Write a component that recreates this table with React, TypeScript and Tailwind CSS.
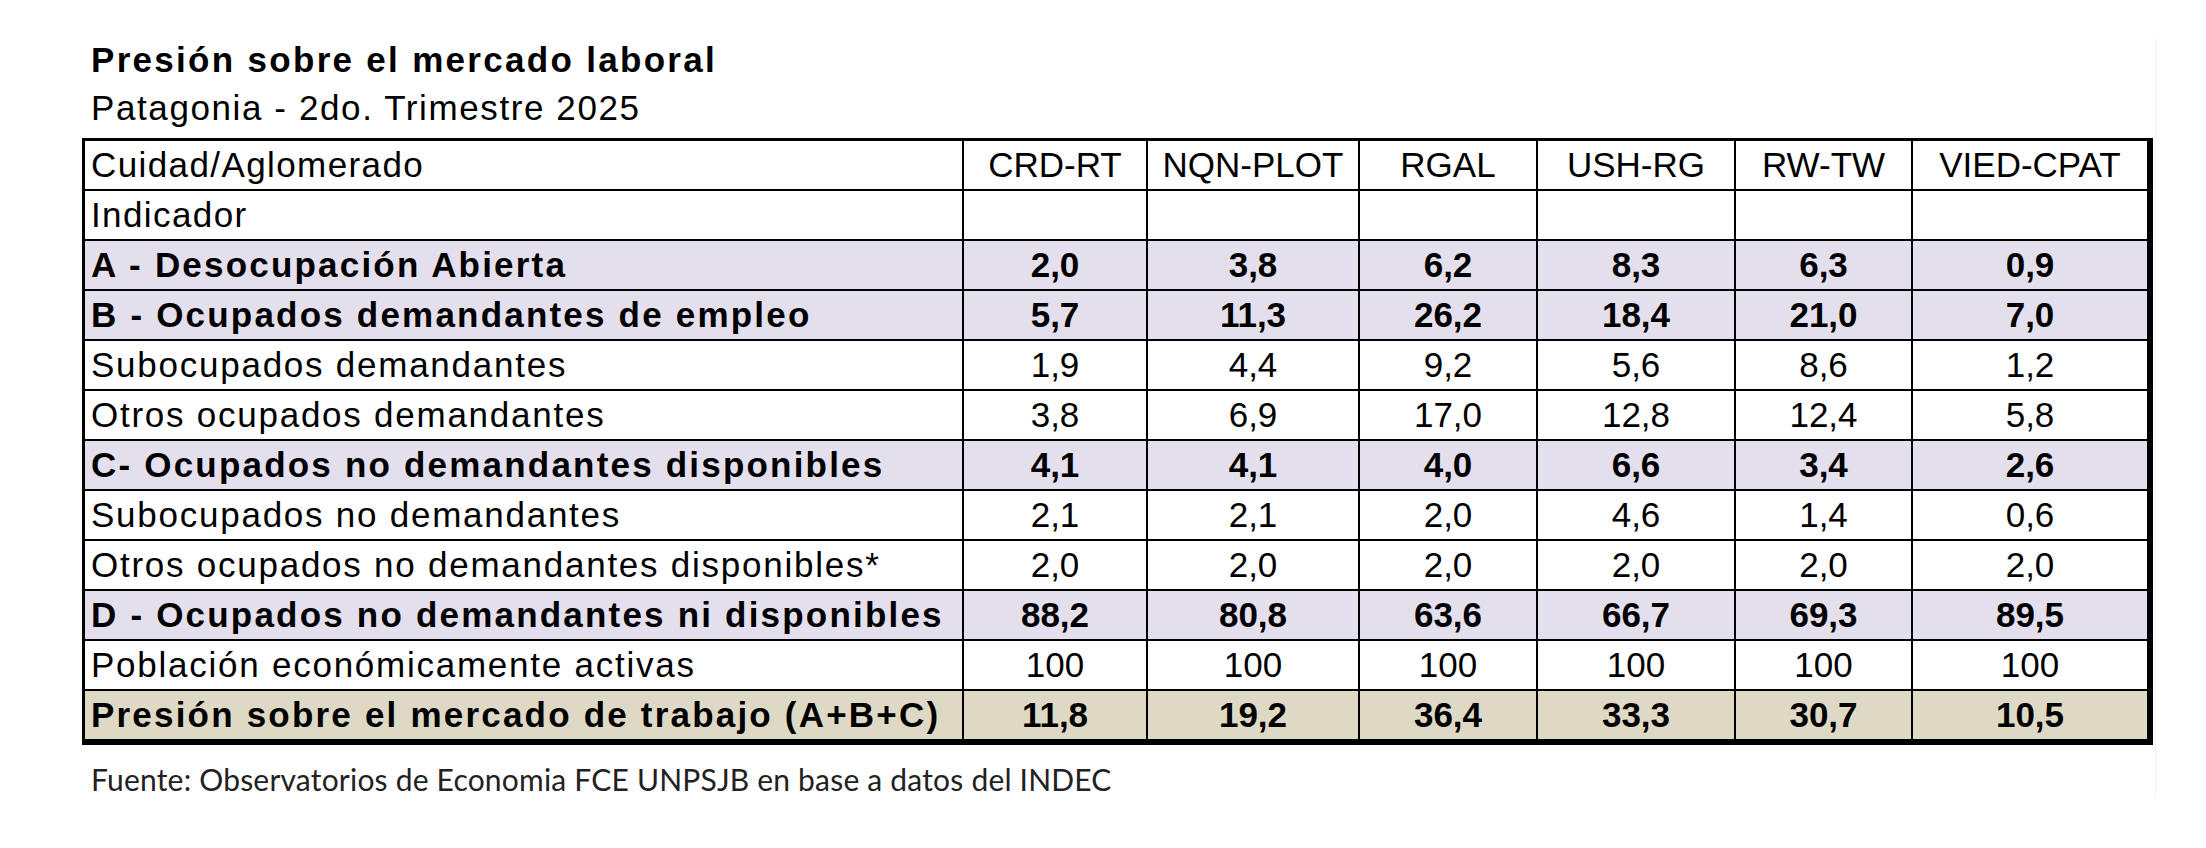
import React from "react";

type Row = {
  label: string;
  values: string[];
  kind: "plain" | "bold" | "total";
};

const cities = ["CRD-RT", "NQN-PLOT", "RGAL", "USH-RG", "RW-TW", "VIED-CPAT"];

const rows: Row[] = [
  { label: "A - Desocupación Abierta", values: ["2,0", "3,8", "6,2", "8,3", "6,3", "0,9"], kind: "bold" },
  { label: "B - Ocupados demandantes de empleo", values: ["5,7", "11,3", "26,2", "18,4", "21,0", "7,0"], kind: "bold" },
  { label: "Subocupados demandantes", values: ["1,9", "4,4", "9,2", "5,6", "8,6", "1,2"], kind: "plain" },
  { label: "Otros ocupados demandantes", values: ["3,8", "6,9", "17,0", "12,8", "12,4", "5,8"], kind: "plain" },
  { label: "C- Ocupados no demandantes disponibles", values: ["4,1", "4,1", "4,0", "6,6", "3,4", "2,6"], kind: "bold" },
  { label: "Subocupados no demandantes", values: ["2,1", "2,1", "2,0", "4,6", "1,4", "0,6"], kind: "plain" },
  { label: "Otros ocupados no demandantes disponibles*", values: ["2,0", "2,0", "2,0", "2,0", "2,0", "2,0"], kind: "plain" },
  { label: "D - Ocupados no demandantes ni disponibles", values: ["88,2", "80,8", "63,6", "66,7", "69,3", "89,5"], kind: "bold" },
  { label: "Población económicamente activas", values: ["100", "100", "100", "100", "100", "100"], kind: "plain" },
  { label: "Presión sobre el mercado de trabajo (A+B+C)", values: ["11,8", "19,2", "36,4", "33,3", "30,7", "10,5"], kind: "total" },
];

const rowBg = (kind: Row["kind"]) =>
  kind === "bold" ? "bg-[#e4dfec]" : kind === "total" ? "bg-[#ddd9c4]" : "bg-white";

const Cell = ({
  children,
  last,
  lastRow,
  className = "",
}: {
  children?: React.ReactNode;
  last?: boolean;
  lastRow?: boolean;
  className?: string;
}) => (
  <div
    className={`flex items-center border-black ${last ? "" : "border-r-2"} ${
      lastRow ? "h-[48px]" : "h-[50px] border-b-2"
    } ${className}`}
  >
    {children}
  </div>
);

const App = () => {
  return (
    <div className="h-[848px] w-[2206px] bg-white font-['Liberation_Sans',Arial,sans-serif] text-black">
      <div className="mt-[38px] h-[760px] w-[2156px] border-r border-[#f1f1f1] pl-[82px]">
        {/* Title */}
        <h1 className="pl-[9px] text-[35px] font-bold leading-[44px] tracking-[2.3px]">
          Presión sobre el mercado laboral
        </h1>
        <p className="mt-[4px] pl-[9px] text-[35px] leading-[44px] tracking-[1.6px]">
          Patagonia - 2do. Trimestre 2025
        </p>

        {/* Table */}
        <div className="mt-[8px] w-[2071px] border-t-[3px] border-r-[6px] border-b-[6px] border-l-[3px] border-black">
          <div className="grid grid-cols-[879px_184px_212px_178px_198px_177px_234px] text-[35px]">
            <Cell className="pl-[6px] tracking-[1.4px]">Cuidad/Aglomerado</Cell>
            {cities.map((c, i) => (
              <Cell key={c} last={i === cities.length - 1} className="justify-center">
                {c}
              </Cell>
            ))}
            <Cell className="pl-[6px] tracking-[1.4px]">Indicador</Cell>
            {cities.map((c, i) => (
              <Cell key={c + "-ind"} last={i === cities.length - 1} />
            ))}

            {rows.map((row, r) => {
              const lastRow = r === rows.length - 1;
              const bold = row.kind !== "plain";
              return (
                <React.Fragment key={row.label}>
                  <Cell
                    lastRow={lastRow}
                    className={`pl-[6px] ${rowBg(row.kind)} ${
                      bold ? "font-bold tracking-[2.2px]" : "tracking-[1.75px]"
                    }`}
                  >
                    {row.label}
                  </Cell>
                  {row.values.map((v, i) => (
                    <Cell
                      key={row.label + i}
                      lastRow={lastRow}
                      last={i === row.values.length - 1}
                      className={`justify-center ${rowBg(row.kind)} ${bold ? "font-bold" : ""}`}
                    >
                      {v}
                    </Cell>
                  ))}
                </React.Fragment>
              );
            })}
          </div>
        </div>

        {/* Source */}
        <p className="mt-[14px] pl-[9px] font-['Lato',sans-serif] text-[30px] leading-[40px] tracking-[0.2px] text-[#222]">
          Fuente: Observatorios de Economia FCE UNPSJB en base a datos del INDEC
        </p>
      </div>
    </div>
  );
};

export default App;
